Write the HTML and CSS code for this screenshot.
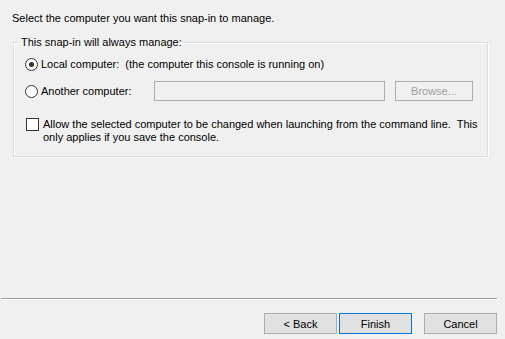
FILE: index.html
```html
<!DOCTYPE html>
<html>
<head>
<meta charset="utf-8">
<link rel="stylesheet" href="styles.css">
</head>
<body>
<div class="page">
  <div class="content">
    <p class="intro">Select the computer you want this snap-in to manage.</p>
    <fieldset class="group">
      <legend class="legend">This snap-in will always manage:</legend>
      <div class="row row-local">
        <span class="radio checked"></span>
        <span class="label">Local computer:&nbsp; (the computer this console is running on)</span>
      </div>
      <div class="row row-another">
        <span class="radio"></span>
        <span class="label label-another">Another computer:</span>
        <span class="textbox"></span>
        <span class="btn-browse">Browse...</span>
      </div>
      <div class="row row-check">
        <span class="check"></span>
        <span class="label multi">Allow the selected computer to be changed when launching from the command line.&nbsp; This only applies if you save the console.</span>
      </div>
    </fieldset>
  </div>
  <div class="footer">
    <div class="sep"></div>
    <div class="buttons">
      <span class="btn">&lt; Back</span>
      <span class="btn btn-default">Finish</span>
      <span class="btn btn-cancel">Cancel</span>
    </div>
  </div>
</div>
</body>
</html>
```
FILE: styles.css
```css
html, body {
  margin: 0;
  padding: 0;
  background: #f0f0f0;
}
body {
  font-family: "Liberation Sans", Arial, sans-serif;
  font-size: 11px;
  color: #000;
  width: 505px;
  height: 339px;
  overflow: hidden;
}
.page {
  display: flex;
  flex-direction: column;
  height: 339px;
}
.content {
  flex: 1;
  padding: 12px 0 0 12px;
}
.intro {
  margin: 0;
  line-height: 13px;
}
.group {
  margin: 11px 0 0 1px;
  width: 475px;
  box-sizing: border-box;
  border: 1px solid #d5dfe5;
  box-shadow: inset 1px 1px 0 #fff, 1px 1px 0 #fff;
  padding: 0 0 12px 11px;
  border-radius: 0;
}
.legend {
  padding: 0 1px;
  margin-left: -5px;
  line-height: 12px;
}
.row {
  display: flex;
  align-items: center;
}
.row-local {
  margin-top: 9px;
  height: 14px;
}
.row-another {
  margin-top: 10px;
  height: 20px;
}
.radio {
  width: 11px;
  height: 11px;
  border: 1px solid #333;
  border-radius: 50%;
  background: #fff;
  box-sizing: content-box;
  flex: none;
  position: relative;
  margin-right: 3px;
}
.radio.checked::after {
  content: "";
  position: absolute;
  left: 3px;
  top: 3px;
  width: 5px;
  height: 5px;
  border-radius: 50%;
  background: #333;
}
.label {
  line-height: 13px;
}
.label-another {
  width: 113px;
}
.textbox {
  width: 229px;
  height: 18px;
  border: 1px solid #adadad;
  background: #f0f0f0;
  flex: none;
}
.btn-browse {
  margin-left: 10px;
  width: 76px;
  height: 18px;
  border: 1px solid #adadad;
  background: #f0f0f0;
  color: #a0a0a0;
  display: flex;
  align-items: center;
  justify-content: center;
  flex: none;
}
.row-check {
  margin-top: 16px;
  align-items: flex-start;
}
.check {
  width: 11px;
  height: 11px;
  border: 1px solid #333;
  background: #fff;
  flex: none;
  margin: 1px 4px 0 1px;
}
.multi {
  width: 436px;
  margin-top: 1px;
}
.footer {
  padding-bottom: 5px;
}
.sep {
  margin-left: 1px;
  width: 496px;
  height: 1px;
  background: #a0a0a0;
  border-bottom: 1px solid #fff;
}
.buttons {
  display: flex;
  margin-top: 13px;
  padding-left: 264px;
}
.btn {
  width: 71px;
  height: 19px;
  border: 1px solid #adadad;
  background: #e1e1e1;
  display: flex;
  align-items: center;
  justify-content: center;
  flex: none;
}
.btn-default {
  margin-left: 2px;
  border-color: #0078d7;
}
.btn-cancel {
  margin-left: 12px;
}
```
